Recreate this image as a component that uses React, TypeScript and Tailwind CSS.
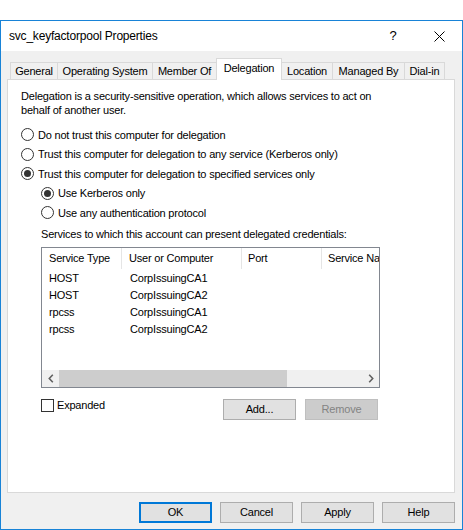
import { ReactNode } from 'react';

const tabs = [
  { label: 'General', w: 'w-[48px]' },
  { label: 'Operating System', w: 'w-[96px]' },
  { label: 'Member Of', w: 'w-[65px]' },
  { label: 'Delegation', w: 'w-[66px]', active: true },
  { label: 'Location', w: 'w-[52px]' },
  { label: 'Managed By', w: 'w-[73px]' },
  { label: 'Dial-in', w: 'w-[41px]' },
];

const services = [
  { type: 'HOST', target: 'CorpIssuingCA1' },
  { type: 'HOST', target: 'CorpIssuingCA2' },
  { type: 'rpcss', target: 'CorpIssuingCA1' },
  { type: 'rpcss', target: 'CorpIssuingCA2' },
];

function Radio({ checked, children, h }: { checked?: boolean; children: ReactNode; h: string }) {
  return (
    <div className={`flex items-center ${h}`}>
      <span className="w-[13px] h-[13px] rounded-full border border-[#333333] bg-white flex items-center justify-center shrink-0">
        {checked && <span className="w-[7px] h-[7px] rounded-full bg-[#333333]" />}
      </span>
      <span className="ml-[4px] leading-[14px]">{children}</span>
    </div>
  );
}

function Chevron({ dir }: { dir: 'left' | 'right' }) {
  return (
    <svg width="6" height="9" viewBox="0 0 6 9">
      <path
        d={dir === 'left' ? 'M4.8 0.8 L1.3 4.5 L4.8 8.2' : 'M1.2 0.8 L4.7 4.5 L1.2 8.2'}
        fill="none"
        stroke="#606060"
        strokeWidth="1.6"
      />
    </svg>
  );
}

function Button({ children, primary, disabled }: { children: ReactNode; primary?: boolean; disabled?: boolean }) {
  let cls = 'border border-[#adadad] bg-[#e1e1e1] text-black';
  if (primary) cls = 'border-2 border-[#0078d7] bg-[#e1e1e1] text-black';
  if (disabled) cls = 'border border-[#bfbfbf] bg-[#cccccc] text-[#838383]';
  return (
    <div className={`w-[73px] h-[21px] flex items-center justify-center ${cls}`}>{children}</div>
  );
}

export default function App() {
  return (
    <div className="w-[463px] h-[530px] bg-white pt-[20px] font-['Liberation_Sans',Arial,sans-serif] text-[11px] tracking-[-0.2px] text-black">
      <div className="h-[510px] border border-[#1883d7] bg-[#f0f0f0] flex flex-col">
        {/* title bar */}
        <div className="h-[30px] bg-white flex items-center">
          <div className="flex-1 pl-[8px] text-[12px]">svc_keyfactorpool Properties</div>
          <div className="w-[46px] h-full flex items-center justify-center text-[13px]">?</div>
          <div className="w-[46px] h-full flex items-center justify-center">
            <svg width="11" height="11" viewBox="0 0 11 11">
              <path d="M0.5 0.5 L10.5 10.5 M10.5 0.5 L0.5 10.5" stroke="#000" strokeWidth="1" />
            </svg>
          </div>
        </div>

        {/* tabs */}
        <div className="ml-[6px] w-[448px] mt-[7px] flex flex-col">
          <div className="flex items-end h-[21px] pl-[3px]">
            {tabs.map((t, i) =>
              t.active ? (
                <div
                  key={t.label}
                  className={`${t.w} h-[22px] -mb-px relative z-10 -ml-px bg-white border border-b-0 border-[#d9d9d9] flex items-center justify-center pb-[2px]`}
                >
                  {t.label}
                </div>
              ) : (
                <div
                  key={t.label}
                  className={`${t.w} h-[17px] ${i > 0 ? '-ml-px' : ''} bg-[#f0f0f0] border border-b-0 border-[#d9d9d9] flex items-center justify-center pt-[1px]`}
                >
                  {t.label}
                </div>
              )
            )}
          </div>

          {/* panel */}
          <div className="h-[414px] border border-[#d9d9d9] bg-white pl-[13px] pt-[9px] flex flex-col">
            <p className="leading-[14px]">
              Delegation is a security-sensitive operation, which allows services to act on
              <br />
              behalf of another user.
            </p>

            <div className="mt-[8px] flex flex-col">
              <Radio h="h-[19px]">Do not trust this computer for delegation</Radio>
              <Radio h="h-[20px]">Trust this computer for delegation to any service (Kerberos only)</Radio>
              <Radio h="h-[19px]" checked>
                Trust this computer for delegation to specified services only
              </Radio>
              <div className="ml-[20px] flex flex-col">
                <Radio h="h-[20px]" checked>
                  Use Kerberos only
                </Radio>
                <Radio h="h-[19px]">Use any authentication protocol</Radio>
              </div>
            </div>

            <div className="ml-[20px] flex flex-col">
              <div className="mt-[5px] leading-[14px]">Services to which this account can present delegated credentials:</div>

              {/* list view */}
              <div className="mt-[6px] w-[339px] h-[141px] border border-[#828790] bg-white flex flex-col overflow-hidden">
                <div className="h-[21px] flex shrink-0">
                  <div className="w-[80px] pl-[7px] flex items-center border-r border-[#e5e5e5]">Service Type</div>
                  <div className="w-[120px] pl-[7px] flex items-center border-r border-[#e5e5e5]">User or Computer</div>
                  <div className="w-[80px] pl-[6px] flex items-center border-r border-[#e5e5e5]">Port</div>
                  <div className="flex-1 pl-[6px] flex items-center whitespace-nowrap overflow-hidden">Service Name</div>
                </div>
                <div className="pt-[1px] flex flex-col">
                  {services.map((s, i) => (
                    <div key={i} className="h-[17px] flex items-center">
                      <div className="w-[80px] pl-[7px]">{s.type}</div>
                      <div className="w-[120px] pl-[8px]">{s.target}</div>
                    </div>
                  ))}
                </div>
                <div className="flex-1" />
                <div className="h-[17px] bg-[#f0f0f0] flex items-center shrink-0">
                  <div className="w-[17px] h-full flex items-center justify-center">
                    <Chevron dir="left" />
                  </div>
                  <div className="w-[228px] h-full bg-[#cdcdcd]" />
                  <div className="flex-1" />
                  <div className="w-[17px] h-full flex items-center justify-center">
                    <Chevron dir="right" />
                  </div>
                </div>
              </div>

              <div className="mt-[11px] w-[339px] pr-[2px] flex items-start">
                <div className="flex items-center h-[13px]">
                  <span className="w-[13px] h-[13px] border border-[#333333] bg-white shrink-0" />
                  <span className="ml-[3px]">Expanded</span>
                </div>
                <div className="ml-auto flex gap-[9px]">
                  <Button>Add...</Button>
                  <Button disabled>Remove</Button>
                </div>
              </div>
            </div>
          </div>
        </div>

        {/* dialog buttons */}
        <div className="mt-[9px] pr-[7px] flex justify-end gap-[8px]">
          <Button primary>OK</Button>
          <Button>Cancel</Button>
          <Button>Apply</Button>
          <Button>Help</Button>
        </div>
      </div>
    </div>
  );
}
